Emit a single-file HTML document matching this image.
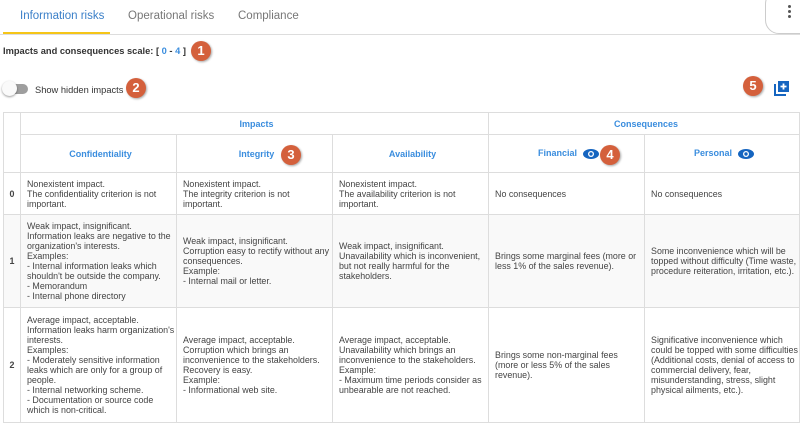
<!DOCTYPE html>
<html><head><meta charset="utf-8"><style>
*{box-sizing:border-box;margin:0;padding:0}
body{width:800px;height:418px;overflow:hidden;background:#fff;font-family:"Liberation Sans",Arial,sans-serif;color:#333;position:relative}
.tabs{position:absolute;left:0;top:0;width:800px;height:35px;border-bottom:1px solid #ddd}
.tab{position:absolute;top:10px;font-size:11.5px;color:#777}
.ul{position:absolute;left:3px;top:32px;width:107px;height:2px;background:#f5c518}
.more{position:absolute;left:765px;top:-10px;width:50px;height:44px;border:1px solid #ccc;border-radius:14px;background:#fff}
.dot{position:absolute;left:309px;width:3px;height:3px;border-radius:50%;background:#555}
.badge{position:absolute;width:20px;height:20px;border-radius:50%;background:#d4603c;color:#fff;font-weight:bold;font-size:13px;text-align:center;line-height:20px;box-shadow:1px 1px 2px rgba(0,0,0,.35)}
table{position:absolute;left:3px;top:112px;border-collapse:collapse;table-layout:fixed;width:796px}
td{border:1px solid #ddd;font-size:8.9px;line-height:10px;padding:0 2px 0 6px;vertical-align:middle;color:#444;white-space:nowrap;overflow:hidden}
.h{color:#3a8dde;text-align:center;font-weight:bold;font-size:9px}
.n{font-weight:bold;text-align:center;padding:0}
.eye{display:inline-block;vertical-align:middle;margin-left:6px}
</style></head><body>
<div class="tabs">
<div class="tab" style="left:20px;color:#3a7fc8">Information risks</div>
<div class="tab" style="left:128px">Operational risks</div>
<div class="tab" style="left:238px">Compliance</div>
<div class="ul"></div>
</div>
<div class="more"><div class="dot" style="left:22px;top:14px"></div><div class="dot" style="left:22px;top:19px"></div><div class="dot" style="left:22px;top:24px"></div></div>
<div style="position:absolute;left:3px;top:46px;font-size:9.3px;font-weight:bold;color:#333">Impacts and consequences scale: [ <span style="color:#3a8dde">0</span> - <span style="color:#3a8dde">4</span> ]</div>
<div class="badge" style="left:191px;top:41px">1</div>
<div style="position:absolute;left:3px;top:84px;width:25px;height:10px;border-radius:5px;background:#9e9e9e"></div>
<div style="position:absolute;left:2px;top:81px;width:15px;height:15px;border-radius:50%;background:#fafafa;box-shadow:0 1px 2px rgba(0,0,0,.4)"></div>
<div style="position:absolute;left:35px;top:85px;font-size:9.3px;color:#333">Show hidden impacts</div>
<div class="badge" style="left:126px;top:78px">2</div>
<div class="badge" style="left:743px;top:76px">5</div>
<svg style="position:absolute;left:774px;top:80px" width="16" height="16" viewBox="0 0 16 16"><path d="M1 4v11h11" fill="none" stroke="#1565c0" stroke-width="2"/><rect x="4" y="1" width="11" height="11" fill="#1565c0"/><path d="M9.5 3.5v6M6.5 6.5h6" stroke="#fff" stroke-width="1.8"/></svg>
<table>
<colgroup><col style="width:17px"><col style="width:156px"><col style="width:156px"><col style="width:156px"><col style="width:156px"><col style="width:155px"></colgroup>
<tr style="height:22px"><td rowspan="2"></td><td colspan="3" class="h">Impacts</td><td colspan="2" class="h">Consequences</td></tr>
<tr style="height:38px"><td class="h">Confidentiality</td><td class="h">Integrity</td><td class="h">Availability</td>
<td class="h">Financial<svg class="eye" width="16" height="10" viewBox="0 0 16 10"><ellipse cx="8" cy="5" rx="8" ry="5" fill="#1565c0"/><ellipse cx="8" cy="5" rx="3" ry="3" fill="#fff"/><circle cx="8" cy="5" r="1.7" fill="#1565c0"/></svg></td>
<td class="h">Personal<svg class="eye" width="16" height="10" viewBox="0 0 16 10"><ellipse cx="8" cy="5" rx="8" ry="5" fill="#1565c0"/><ellipse cx="8" cy="5" rx="3" ry="3" fill="#fff"/><circle cx="8" cy="5" r="1.7" fill="#1565c0"/></svg></td></tr>
<tr style="height:42px"><td class="n">0</td><td>Nonexistent impact.<br>The confidentiality criterion is not<br>important.</td><td>Nonexistent impact.<br>The integrity criterion is not<br>important.</td><td>Nonexistent impact.<br>The availability criterion is not<br>important.</td><td>No consequences</td><td>No consequences</td></tr>
<tr style="height:93px;background:#f9f9f9"><td class="n">1</td><td>Weak impact, insignificant.<br>Information leaks are negative to the<br>organization's interests.<br>Examples:<br>- Internal information leaks which<br>shouldn't be outside the company.<br>- Memorandum<br>- Internal phone directory</td><td>Weak impact, insignificant.<br>Corruption easy to rectify without any<br>consequences.<br>Example:<br>- Internal mail or letter.</td><td>Weak impact, insignificant.<br>Unavailability which is inconvenient,<br>but not really harmful for the<br>stakeholders.</td><td>Brings some marginal fees (more or<br>less 1% of the sales revenue).</td><td>Some inconvenience which will be<br>topped without difficulty (Time waste,<br>procedure reiteration, irritation, etc.).</td></tr>
<tr style="height:115px"><td class="n">2</td><td>Average impact, acceptable.<br>Information leaks harm organization's<br>interests.<br>Examples:<br>- Moderately sensitive information<br>leaks which are only for a group of<br>people.<br>- Internal networking scheme.<br>- Documentation or source code<br>which is non-critical.</td><td>Average impact, acceptable.<br>Corruption which brings an<br>inconvenience to the stakeholders.<br>Recovery is easy.<br>Example:<br>- Informational web site.</td><td>Average impact, acceptable.<br>Unavailability which brings an<br>inconvenience to the stakeholders.<br>Example:<br>- Maximum time periods consider as<br>unbearable are not reached.</td><td>Brings some non-marginal fees<br>(more or less 5% of the sales<br>revenue).</td><td>Significative inconvenience which<br>could be topped with some difficulties<br>(Additional costs, denial of access to<br>commercial delivery, fear,<br>misunderstanding, stress, slight<br>physical ailments, etc.).</td></tr>
</table>
<div class="badge" style="left:281px;top:145px">3</div>
<div class="badge" style="left:600px;top:145px">4</div>
</body></html>
